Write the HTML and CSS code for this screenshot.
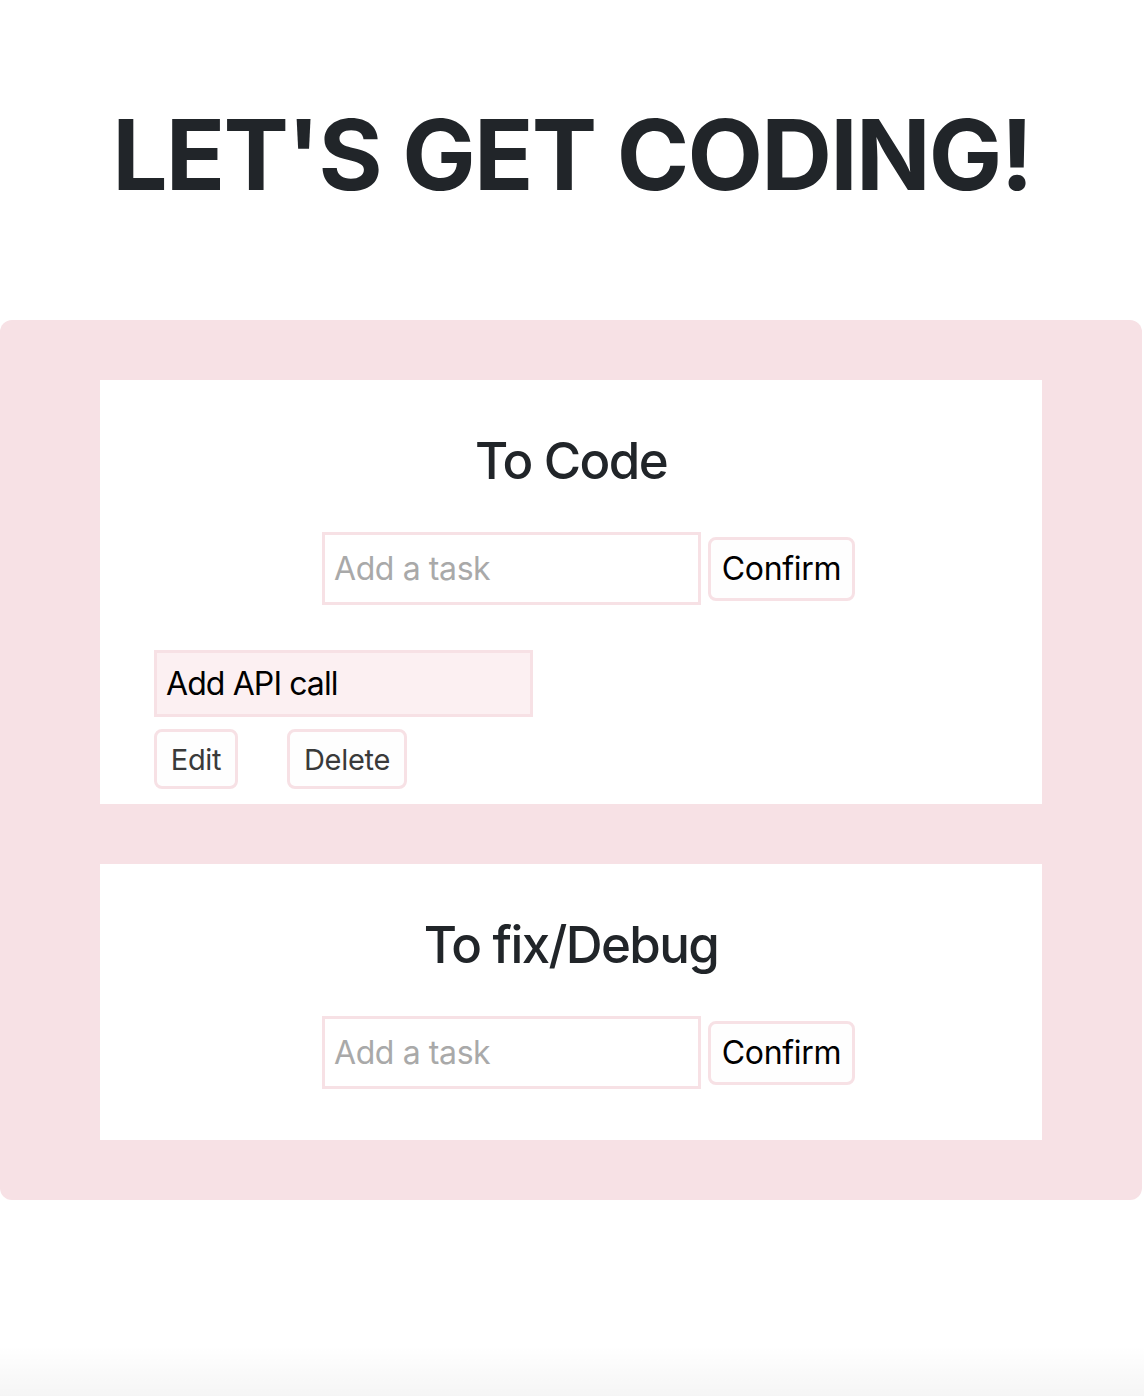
FILE: index.html
```html
<!DOCTYPE html>
<html lang="en">
<head>
<meta charset="utf-8">
<title>Let's get coding</title>
<link rel="stylesheet" href="styles.css">
</head>
<body>
<header class="hero">
  <h1 class="hero-title">LET'S GET CODING!</h1>
</header>
<main class="board">
  <section class="card">
    <h2 class="card-title">To Code</h2>
    <form class="add-row">
      <input class="task-input" type="text" placeholder="Add a task">
      <button class="btn btn-confirm" type="button">Confirm</button>
    </form>
    <ul class="task-list">
      <li class="task">
        <div class="task-text">Add API call</div>
        <div class="task-actions">
          <button class="btn btn-small" type="button">Edit</button>
          <button class="btn btn-small" type="button">Delete</button>
        </div>
      </li>
    </ul>
  </section>
  <section class="card card-last">
    <h2 class="card-title">To fix/Debug</h2>
    <form class="add-row">
      <input class="task-input" type="text" placeholder="Add a task">
      <button class="btn btn-confirm" type="button">Confirm</button>
    </form>
  </section>
</main>
<div class="bottom-fade"></div>
</body>
</html>
```
FILE: styles.css
```css
* { box-sizing: border-box; }
html, body { margin: 0; padding: 0; }
body {
  font-family: Inter, "Noto Sans", sans-serif;
  color: #212529;
  background: #ffffff;
  width: 1144px;
  height: 1396px;
  overflow: hidden;
  position: relative;
}
.hero {
  padding-top: 100px;
  height: 320px;
  text-align: center;
}
.hero-title {
  margin: 0;
  font-size: 98px;
  font-weight: 700;
  line-height: 110px;
  letter-spacing: -1.8px;
  color: #212529;
}
.board {
  width: 1142px;
  background: #f7e1e5;
  border-radius: 12px;
  padding: 60px 100px;
  display: flex;
  flex-direction: column;
  gap: 60px;
}
.card {
  background: #ffffff;
  padding: 49px 54px 15px;
}
.card-last { padding-bottom: 51px; }
.card-title {
  margin: 0;
  text-align: center;
  font-size: 51px;
  font-weight: 500;
  line-height: 64px;
  letter-spacing: -1.6px;
}
.add-row {
  margin-top: 39px;
  display: flex;
  justify-content: center;
  align-items: center;
  gap: 7px;
  padding-left: 35px;
}
.task-input {
  width: 379px;
  height: 73px;
  border: 3px solid #f7e1e5;
  padding: 0 9px;
  font-family: Inter, sans-serif;
  font-size: 32px;
  letter-spacing: -0.4px;
  color: #000;
  outline: none;
}
.task-input::placeholder { color: #a9a9a9; }
.btn {
  font-family: Inter, sans-serif;
  background: #fefefe;
  border: 3px solid #f7e1e5;
  border-radius: 8px;
  cursor: pointer;
}
.btn-confirm {
  height: 64px;
  width: 147px;
  padding: 0;
  font-size: 32px;
  letter-spacing: -0.3px;
  color: #000;
}
.task-list {
  list-style: none;
  margin: 45px 0 0;
  padding: 0;
}
.task-text {
  width: 379px;
  height: 67px;
  background: #fcf0f2;
  border: 3px solid #f7e1e5;
  padding: 0 9px;
  font-size: 32px;
  letter-spacing: -0.9px;
  line-height: 61px;
  color: #000;
}
.task-actions {
  margin-top: 12px;
  display: flex;
  gap: 49px;
}
.btn-small {
  height: 60px;
  padding: 0 14px;
  font-size: 29px;
  letter-spacing: -0.3px;
  color: #3a3a3a;
}
.btn-small:first-child { width: 84px; padding: 0; }
.btn-small:last-child { width: 120px; padding: 0; }
.bottom-fade {
  position: absolute;
  left: 0;
  right: 0;
  bottom: 0;
  height: 50px;
  background: linear-gradient(to bottom, rgba(0,0,0,0), rgba(0,0,0,0.04));
}
```
